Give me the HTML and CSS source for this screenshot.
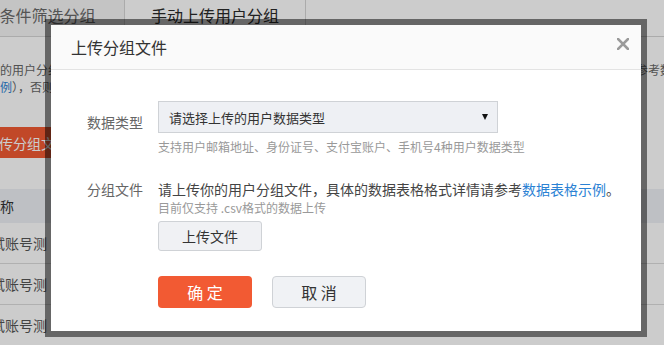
FILE: index.html
```html
<!DOCTYPE html>
<html lang="zh">
<head>
  <meta charset="UTF-8">
  <meta name="viewport" content="width=device-width, initial-scale=1.0">
  <title>上传分组文件</title>
  <link rel="stylesheet" href="styles.css">
</head>
<body>
  <div class="page">
    <div class="tabs">
      <div class="tab">条件筛选分组</div>
      <div class="tab tab-active">手动上传用户分组</div>
    </div>

    <div class="intro">
      <p>上传的用户分组文件中每一行只能包含一个用户数据，且同一个文件中只能包含同一种类型的用户数据，如果您有任何疑问请参考数据表格示</p>
      <p><a href="#">格示例</a>），否则文件将无法上传成功。</p>
    </div>

    <button class="page-btn">上传分组文件</button>

    <table class="group-table">
      <thead>
        <tr><th>名称</th><th></th></tr>
      </thead>
      <tbody>
        <tr><td>测试账号测</td><td></td></tr>
        <tr><td>测试账号测</td><td></td></tr>
        <tr><td>测试账号测</td><td></td></tr>
      </tbody>
    </table>
  </div>

  <div class="mask"></div>

  <div class="modal">
    <div class="modal-header">
      <span class="modal-title">上传分组文件</span>
      <svg class="modal-close" width="12" height="12" viewBox="0 0 12 12">
        <path d="M1 1L11 11M11 1L1 11" stroke="#9a9a9a" stroke-width="2.6" stroke-linecap="square"/>
      </svg>
    </div>

    <div class="modal-body">
      <div class="form-row">
        <label class="form-label form-label-select">数据类型</label>
        <div class="form-field">
          <div class="select">
            <span>请选择上传的用户数据类型</span>
            <i class="select-arrow"></i>
          </div>
          <p class="help">支持用户邮箱地址、身份证号、支付宝账户、手机号4种用户数据类型</p>
        </div>
      </div>

      <div class="form-row form-row-file">
        <label class="form-label">分组文件</label>
        <div class="form-field">
          <p class="field-text">请上传你的用户分组文件，具体的数据表格格式详情请参考<a href="#">数据表格示例</a>。</p>
          <p class="help">目前仅支持 .csv格式的数据上传</p>
          <button class="btn-upload">上传文件</button>
        </div>
      </div>

      <div class="modal-footer">
        <button class="btn btn-primary">确 定</button>
        <button class="btn btn-cancel">取 消</button>
      </div>
    </div>
  </div>
</body>
</html>
```

FILE: styles.css
```css
html, body { margin: 0; padding: 0; overflow: hidden; height: 100%; }
body { font-family: "Noto Sans CJK SC", "Liberation Sans", sans-serif; background: #fff; color: #333; }
p { margin: 0; }
a { color: #2b82d4; text-decoration: none; }
button { font-family: inherit; cursor: pointer; }

/* page behind the dialog */
.page { margin-left: -29px; width: 760px; }
.tabs { display: flex; height: 36px; border-bottom: 1px solid #d6d6d6; }
.tab { width: 153px; line-height: 31px; text-align: center; font-size: 16px; color: #6a6a6a; background: #f5f5f5; border-right: 1px solid #d6d6d6; }
.tab-active { width: 180px; color: #2a2a2a; background: #fff; }
.intro { padding: 24px 0 0 5px; font-size: 12px; line-height: 17px; color: #666; white-space: nowrap; }
.page-btn { display: block; margin: 32px 0 0 -6px; height: 31px; padding: 0 20px; border: none; border-radius: 2px; background: #f25a33; color: #fff; font-size: 14px; }
.group-table { margin-top: 31px; width: 760px; border-collapse: collapse; font-size: 14px; color: #333; }
.group-table th { height: 34px; padding: 0 0 0 15px; text-align: left; font-weight: normal; background: #eef1f6; }
.group-table td { height: 40px; padding: 0 0 0 15px; text-indent: -9px; border-bottom: 1px solid #dcdcdc; color: #555; }

.mask { position: fixed; top: 0; left: 0; right: 0; bottom: 0; background: rgba(0, 0, 0, 0.2); }

/* dialog */
.modal { position: absolute; left: 45px; top: 19px; width: 602px; box-sizing: border-box; border: 6px solid rgba(0, 0, 0, 0.5); background: #fff; background-clip: padding-box; }
.modal-header { display: flex; justify-content: space-between; height: 45px; box-sizing: border-box; padding: 0 12px 0 20px; background: #fafafa; border-bottom: 1px solid #e3e3e3; }
.modal-title { font-size: 16px; line-height: 44px; color: #333; }
.modal-close { margin-top: 13px; }
.modal-body { padding: 31px 0 23px; }

.form-row { display: flex; }
.form-row-file { margin-top: 23px; }
.form-label { width: 92px; margin-right: 15px; text-align: right; font-size: 14px; line-height: 20px; color: #666; }
.form-label-select { padding-top: 11px; }
.form-field { display: flex; flex-direction: column; align-items: flex-start; }

.select { display: flex; align-items: center; justify-content: space-between; width: 340px; height: 32px; box-sizing: border-box; padding: 0 9px 0 10px; border: 1px solid #cfd2d6; background: #eef0f4; font-size: 13px; color: #333; }
.select-arrow { width: 0; height: 0; border-left: 3.5px solid transparent; border-right: 3.5px solid transparent; border-top: 6px solid #111; }
.help { margin-top: 5px; font-size: 12px; line-height: 18px; color: #999; }
.form-row-file .help { margin-top: 0; }
.field-text { font-size: 14px; line-height: 20px; color: #444; }

.btn-upload { margin-top: 4px; width: 104px; height: 30px; border: 1px solid #cfd2d6; border-radius: 3px; background: #f0f1f4; font-size: 14px; color: #333; }

.modal-footer { display: flex; gap: 20px; margin-top: 25px; padding-left: 107px; }
.btn { width: 94px; height: 32px; border-radius: 4px; font-size: 16px; }
.btn-primary { border: none; background: #f25a33; color: #fff; }
.btn-cancel { border: 1px solid #cfd2d6; background: #f0f2f5; color: #333; }
```
